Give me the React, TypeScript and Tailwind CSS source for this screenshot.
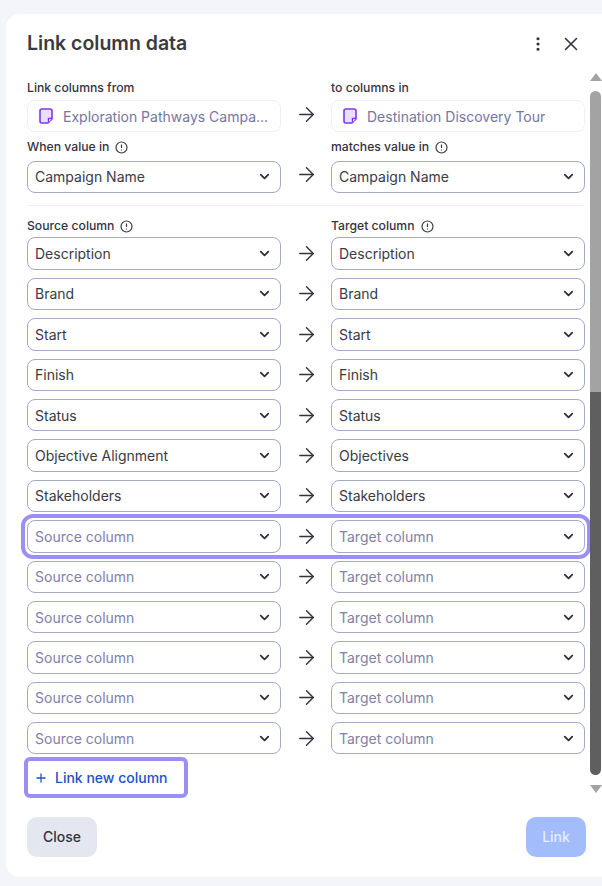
import { ChevronDown, ArrowRight, EllipsisVertical, X, Plus } from "lucide-react";

const rows = [
  ["Description", "Description"],
  ["Brand", "Brand"],
  ["Start", "Start"],
  ["Finish", "Finish"],
  ["Status", "Status"],
  ["Objective Alignment", "Objectives"],
  ["Stakeholders", "Stakeholders"],
  ["", ""],
  ["", ""],
  ["", ""],
  ["", ""],
  ["", ""],
  ["", ""],
];

function Info() {
  return (
    <svg width="13" height="13" viewBox="0 0 13 13" fill="none" stroke="#3a3a48" strokeWidth="1.2" className="ml-[6px] shrink-0">
      <circle cx="6.5" cy="6.5" r="5.5" />
      <path d="M6.5 3.5v3.6M6.5 8.6v1" />
    </svg>
  );
}

function Note() {
  return (
    <svg width="14" height="16" viewBox="0 0 14 16" className="shrink-0">
      <path
        d="M3 1h8a2 2 0 0 1 2 2v8l-4 4H3a2 2 0 0 1-2-2V3a2 2 0 0 1 2-2Z"
        fill="#e9e0fd"
        stroke="#7c3aed"
        strokeWidth="1.6"
        strokeLinejoin="round"
      />
      <path d="M13 10.5H9.5V14.5" fill="#fff" stroke="#7c3aed" strokeWidth="1.4" />
    </svg>
  );
}

function Label({ text, info }: { text: string; info?: boolean }) {
  return (
    <div className="flex h-[17px] items-center text-[12.2px] font-medium text-[#33333f]">
      {text}
      {info && <Info />}
    </div>
  );
}

function Sheet({ name }: { name: string }) {
  return (
    <div className="flex h-[32px] items-center gap-[10px] rounded-[8px] border border-[#eef0f7] pl-[11px] text-[14px] text-[#7476a3]">
      <Note />
      <span className="truncate">{name}</span>
    </div>
  );
}

function Select({ value, placeholder }: { value: string; placeholder: string }) {
  return (
    <div className="flex h-[32.4px] items-center justify-between rounded-[8px] border border-[#a6a8c8] bg-white pl-[7px] pr-[8px] text-[14px]">
      {value ? (
        <span className="text-[#3a3a46]">{value}</span>
      ) : (
        <span className="text-[#7f81a8]">{placeholder}</span>
      )}
      <ChevronDown size={15} strokeWidth={2.8} className="text-[#2c2c3a]" />
    </div>
  );
}

function Arrow() {
  return (
    <div className="flex items-center justify-center">
      <ArrowRight size={23} strokeWidth={1.5} className="text-[#33333f]" />
    </div>
  );
}

export default function App() {
  return (
    <div
      className="h-[886px] w-[602px] overflow-hidden bg-[#f3f5fa] pl-[6px] pt-[14px]"
      style={{ fontFamily: "Inter, 'Noto Sans', sans-serif" }}
    >
      <div className="relative flex h-[863px] w-[610px] flex-col rounded-[14px] bg-white pl-[21px]">
        <div className="flex h-[66px] w-[555px] items-center justify-between pb-[7px]">
          <h1 className="text-[19.5px] font-semibold text-[#3a3a42]">Link column data</h1>
          <div className="flex items-center gap-[13px] text-[#33333f]">
            <EllipsisVertical size={18} strokeWidth={2.2} />
            <X size={22} strokeWidth={1.7} />
          </div>
        </div>

        <div className="grid w-[558px] grid-cols-[254px_50px_254px]">
          <Label text="Link columns from" />
          <div />
          <Label text="to columns in" />
          <div className="mt-[3px]">
            <Sheet name="Exploration Pathways Campa..." />
          </div>
          <Arrow />
          <div className="mt-[3px]">
            <Sheet name="Destination Discovery Tour" />
          </div>
          <div className="mt-[7px]">
            <Label text="When value in" info />
          </div>
          <div />
          <div className="mt-[7px]">
            <Label text="matches value in" info />
          </div>
          <div className="mt-[4.5px]">
            <Select value="Campaign Name" placeholder="" />
          </div>
          <Arrow />
          <div className="mt-[4.5px]">
            <Select value="Campaign Name" placeholder="" />
          </div>
        </div>

        <div className="mt-[12px] h-px w-[558px] bg-[#eceef6]" />

        <div className="mt-[12px] grid w-[558px] grid-cols-[254px_50px_254px]">
          <Label text="Source column" info />
          <div />
          <Label text="Target column" info />
        </div>

        <div className="mt-[2.5px] flex w-[558px] flex-col gap-[8px]">
          {rows.map(([source, target], i) => (
            <div
              key={i}
              className={
                i === 7
                  ? "grid grid-cols-[254px_50px_254px] rounded-[6px] outline-[4px] outline-offset-[2px] outline-[#9b8ff5]"
                  : "grid grid-cols-[254px_50px_254px]"
              }
            >
              <Select value={source} placeholder="Source column" />
              <Arrow />
              <Select value={target} placeholder="Target column" />
            </div>
          ))}
        </div>

        <div className="mt-[3px] -ml-[3px] flex h-[41px] w-[164px] items-center gap-[7px] rounded-[6px] border-4 border-[#9b8ff5] pl-[6px] text-[14px] font-medium text-[#2450c8]">
          <Plus size={14} strokeWidth={2.2} />
          Link new column
        </div>

        <div className="mt-[18.5px] flex w-[559px] items-center justify-between">
          <button className="h-[40px] w-[70px] rounded-[10px] bg-[#e4e6f0] text-[14px] font-medium text-[#33333f]">
            Close
          </button>
          <button className="h-[40px] w-[60px] rounded-[10px] bg-[#a3bdfc] text-[14px] font-medium text-[#e6edff]">
            Link
          </button>
        </div>

        {/* browser scrollbar painted over the dialog */}
        <div className="absolute left-[584px] top-[59px] h-0 w-0 border-x-[6px] border-b-[8px] border-x-transparent border-b-[#a3a3a3]" />
        <div className="absolute left-[584px] top-[77px] flex h-[684px] w-[11px] flex-col overflow-hidden rounded-[6px]">
          <div className="h-[301px] bg-[#a3a3a3]" />
          <div className="flex-1 bg-[#5f5f5f]" />
        </div>
        <div className="absolute left-[584px] top-[771px] h-0 w-0 border-x-[6px] border-t-[8px] border-x-transparent border-t-[#a3a3a3]" />
      </div>
    </div>
  );
}
